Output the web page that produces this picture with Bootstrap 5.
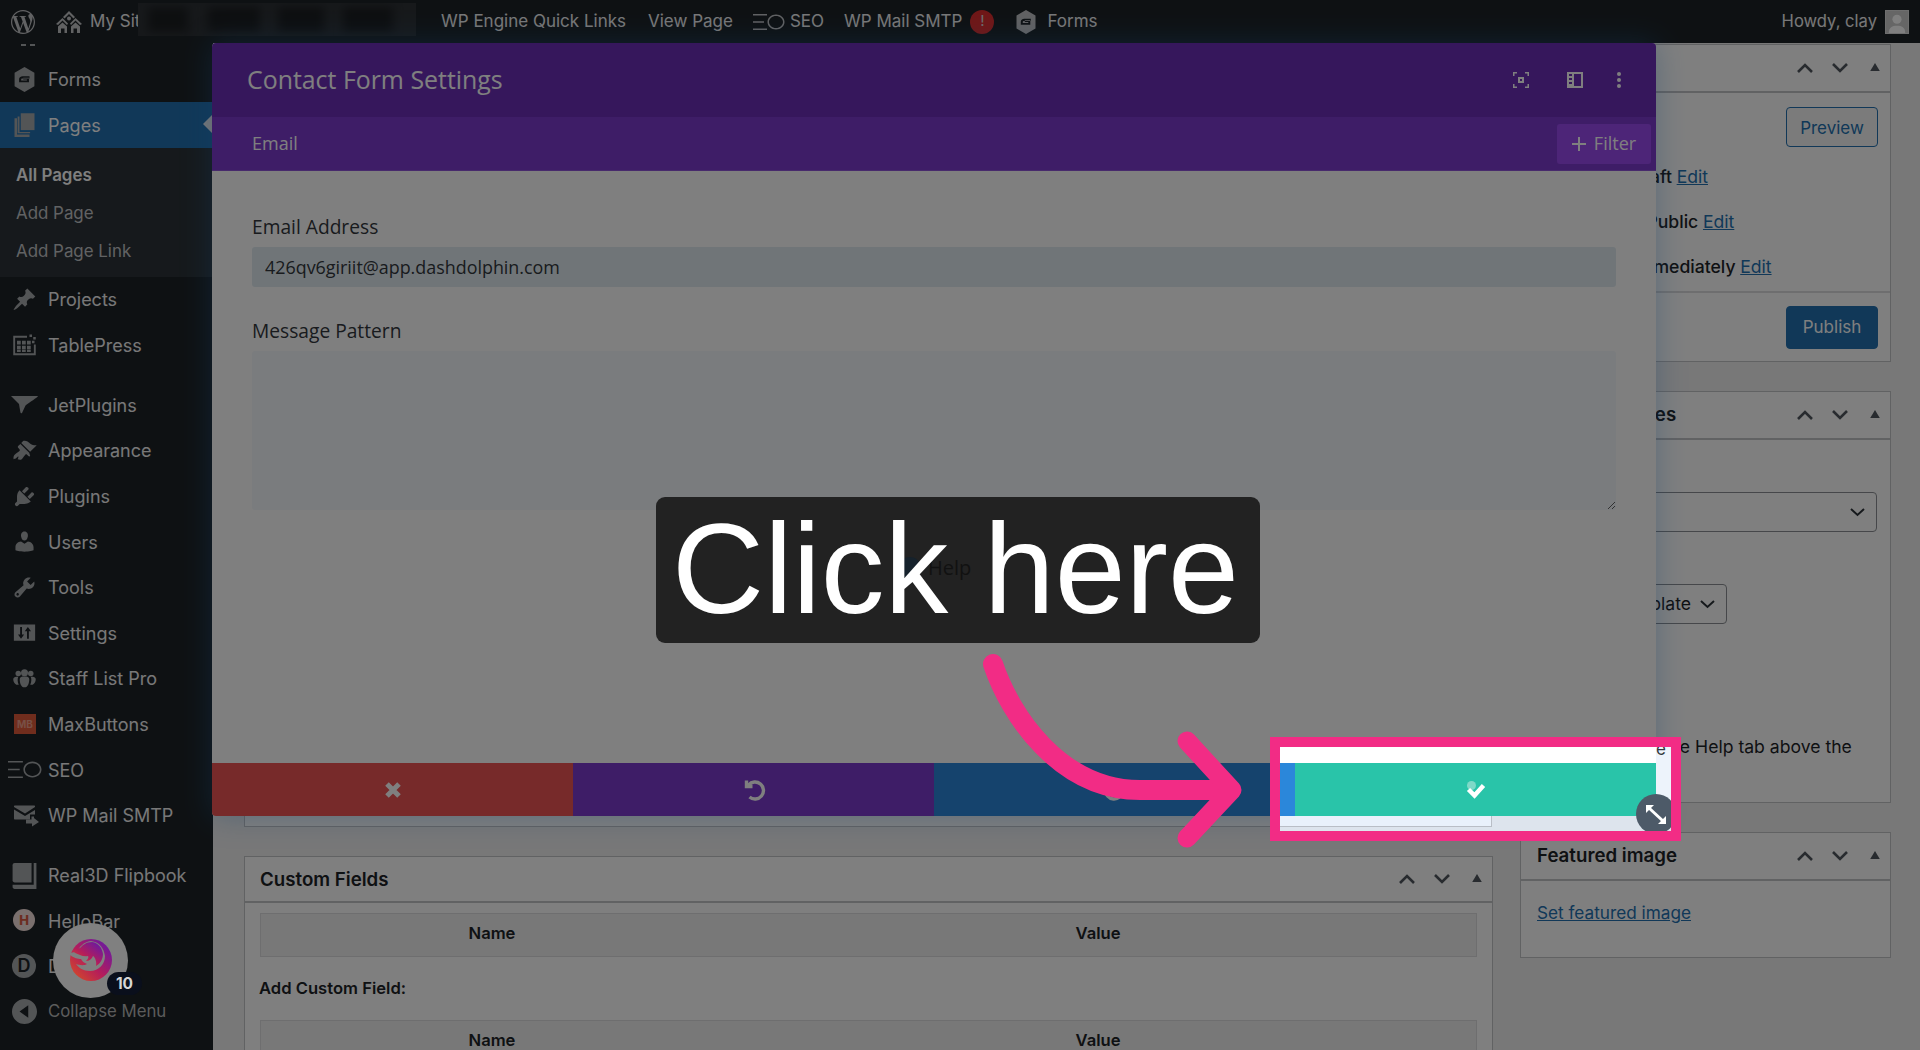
<!doctype html>
<html lang="en">
<head>
<meta charset="utf-8">
<title>Contact Form Settings</title>
<link href="https://cdn.jsdelivr.net/npm/bootstrap@5.3.0/dist/css/bootstrap.min.css" rel="stylesheet">
<style>
html,body{margin:0;height:1050px;overflow:hidden;background:#f0f0f1}
.stage{position:relative;width:1920px;height:1050px;overflow:hidden;font-family:Inter,"Liberation Sans",sans-serif;color:#1d2327;background:#f0f0f1}
.wpbar{height:43px;background:#1d2327;color:#f0f0f1;font-size:17px;position:relative}
.wpbar svg{fill:#c3c4c7;display:block}
.wb-logo{margin-left:11px;width:24px;height:24px}
.wb-home{margin-left:21px;width:26px;height:22px}
.wb-site{margin-left:8px;width:351px;white-space:nowrap}
.wb-e{margin-right:22px;white-space:nowrap}
.wb-n{margin-right:20px;white-space:nowrap}
.wb-seo{width:32px;height:18px;margin-right:5px}
.wb-alert{width:24px;height:24px;border-radius:50%;background:#e02f2f;color:#ddd;font-size:15px;margin-left:8px;margin-right:22px}
.wb-gf{width:20px;height:24px;margin-right:11px}
.wb-how{margin-left:auto;margin-right:8px;font-size:16.6px}
.wb-ava{width:24px;height:24px;background:#ccc;margin-right:11px;border:1px solid #ddd;overflow:hidden}
.blurbox{position:absolute;left:138px;top:3px;width:278px;height:33px;background:#2e3236;overflow:hidden}
.blurbox i{position:absolute;top:4px;height:25px;background:#1b1e21;filter:blur(5px)}
.bl1{left:10px;width:40px}.bl2{left:70px;width:52px}.bl3{left:140px;width:46px}.bl4{left:205px;width:50px}
.side{width:213px;height:1007px;background:#1d2327;color:#f0f0f1;font-size:18px;flex:none;overflow:hidden}
.sidetop{height:13.7px;padding-left:21px;gap:4px}
.sidetop b{display:block;width:5px;height:2px;margin-top:1px;background:#a7aaad}
.srow{height:45.6px;padding-left:48px;position:relative;white-space:nowrap}
.srow svg{position:absolute;left:12px;top:10px;width:25px;height:25px;fill:#a7aaad}
.srow.wide svg{left:8px;width:34px}
.srow.wjet svg{left:11px;width:27px}
.srow.wmail svg{left:13px;width:27px}
.srow.wbook svg{left:12px;width:25px;height:26px}
.srow.cur{background:#2271b1;color:#fff}
.srow.cur::after{content:"";position:absolute;right:1px;top:13px;border:9px solid transparent;border-right-color:#f0f0f1;border-left:0}
.sub{background:#2c3338;height:129px;padding:9px 0 0 16px;font-size:16.9px;color:#c3c4c7}
.sub div{height:38px;display:flex;align-items:center}
.sub .on{color:#fff;font-weight:600}
.gap1{margin-top:14.4px}
.colps{font-size:16.8px;color:#b8b8b8;margin-top:-1px}
.mb{position:absolute;left:14px;top:12px;width:22px;height:20px;background:#e05a3a;color:#f1a08c;font-size:10px;font-weight:700;line-height:20px;text-align:center}
.hb{position:absolute;left:13px;top:11px;width:22px;height:22px;border-radius:50%;background:#f5e0dc;color:#d85a42;font-size:13px;font-weight:800;line-height:22px;text-align:center}
.dcirc{position:absolute;left:12px;top:10px;width:24px;height:24px;border-radius:50%;background:#a7aaad;color:#1d2327;font-size:18px;font-weight:600;line-height:24px;text-align:center}
.pagew{flex:1;padding:1px 28px 0 31px;gap:27px;min-width:0}
.leftc{width:1249px;flex:none}
.rightc{width:371px;flex:none}
.pbox{background:#fff;border:1px solid #c3c4c7;position:relative;font-size:17.6px}
.pbox-h{height:48px;border-bottom:2px solid #c3c4c7;padding:0 7px 0 16px;font-size:18.7px;font-weight:600;gap:17px}
.pbox-h .ttl{margin-right:auto;white-space:nowrap}
.pbox-h svg{width:18px;height:14px;stroke:#50575e;stroke-width:2.6;fill:none}
.pbox-h svg.tri{fill:#50575e;stroke:none;width:10px;height:8px;margin-left:4px;margin-right:3px;margin-top:-3px}
.box0{height:725px;margin-top:58px}
.box1{height:318px}
.box2{height:412px;margin-top:29px}
.box3{height:126px;margin-top:29px}
.boxcf{height:300px;margin-top:29px}
.boxcf .pbox-h{height:46px;padding-left:15px}
.boxcf .ttl{padding-top:2px}
.wbtn{position:absolute;right:12px;top:62px;width:92px;height:40px;border:1px solid #2271b1;border-radius:4px;color:#2271b1;font-size:17px;background:#f6f7f7;padding:3px 0 0}
.wpub{position:absolute;right:12px;top:261px;width:92px;height:43px;background:#2271b1;border:1px solid #2271b1;border-radius:4px;color:#fff;font-size:17px;padding:0}
.mrow{position:absolute;left:44px;white-space:nowrap;font-weight:500}
.mr1{top:119px;left:46px}.mr2{top:164px}.mr3{top:209px;left:46px}
.mrow a,.flink{color:#2271b1;text-decoration:underline;font-weight:400}
.flink{margin:19px 16px 0;font-size:17.2px}
.sline{position:absolute;left:0;right:0;top:246px;border-top:2px solid #dcdcde}
.fakesel{position:absolute;border:1px solid #8c8f94;border-radius:4px;height:40px;background:#fff;white-space:nowrap;overflow:hidden;padding-right:10px}
.fs1{left:16px;right:13px;top:100px}
.fs2{left:16px;width:190px;top:192px}
.helpl{position:absolute;left:6px;top:342px;white-space:nowrap}
.fakesel svg{width:17px;height:10px;stroke:#2c3338;stroke-width:2;fill:none}
.tbl-h{margin:10px 15px 0;height:44px;background:#f0f0f0;border:1px solid #dcdcde;font-weight:600;font-size:16.6px}
.tbl-h span{position:absolute;transform:translate(-50%,-2px)}
.tbl-h .nm{left:247px}.tbl-h .vl{left:853px}
.addf{margin:20px 14px 21px;font-weight:600;font-size:16.6px;line-height:22px}
.setm{position:absolute;left:212px;top:43px;width:1444px;height:773px;z-index:40;background:#fff;border-radius:4px 4px 0 4px;box-shadow:0 0 30px rgba(43,135,218,.35);font-family:"Open Sans","Liberation Sans",sans-serif}
.setm-h{height:74px;background:#6c2eb9;color:#fff;padding:0 27px 0 35px;font-size:24.9px;border-radius:4px 4px 0 0}
.setm-h svg{width:20px;height:20px;fill:#fff;margin-left:34px}
.setm-h svg.ic2{margin-left:34.5px}
.setm-h svg.ic3{margin-left:24px}
.setm-s{height:54px;background:#7d3bcf;color:#fff;padding:0 5px 0 40px;font-size:18px;border-bottom:1px solid #8f55d8}
.fltbtn{height:40px;width:94px;background:#9b4af0;color:#fff;font-size:18px;padding:0;border:0;border-radius:3px}
.setm-b{flex:1;padding:0 40px;position:relative;font-size:19.2px}
.setm-b label{color:#32373c;font-weight:500;display:block;margin:0 0 8px;line-height:24px}
.lb1{margin-top:44px!important}
.lb2{margin-top:32px!important}
.emailv{height:40px;background:#e1ebf1;border:0;border-radius:3px;font-size:17.9px;color:#32373c;padding:0 13px;box-shadow:none}
.msgv{height:159px;background:#f4f8fc;border:0;border-radius:3px;resize:vertical;box-shadow:none}
.setm-f{height:53px}
.fbtn{flex:1 1 0;border-radius:0;border:0;height:53px;padding:0}
.fbtn svg{width:26px;height:26px;fill:none;stroke:#fff}
.f-r{background:#ef5555;border-bottom-left-radius:4px}.f-p{background:#7d3bcf}.f-b{background:#2b87da}.f-g{background:#29c4a9}
.dimr{position:absolute;inset:0;background:rgba(0,0,0,.5);z-index:50}
.bub{position:absolute;left:53px;top:923px;width:75px;height:75px;border-radius:50%;background:#808080;z-index:55}
.bub svg{position:absolute;left:16px;top:15px;width:44px;height:44px}
.bub-n{position:absolute;left:54px;top:49px;width:35px;height:23px;border-radius:12px;background:#0a0f1c;color:#d6d6d6;font:700 15.5px/23px Inter,sans-serif;text-align:center}
.spotw{position:absolute;left:1270px;top:737px;width:411px;height:104px;border:10px solid #f22c85;z-index:60;background:#fff;overflow:hidden}
.sp1{height:16px;background:#fff}
.sp1 em{font-style:normal;display:block;width:15px;height:16px;margin-left:auto;background:#edf3fb;color:#32373c;font-size:17px;line-height:0;padding-left:0;overflow:hidden;padding-top:2px}
.sp2{height:53px}
.sp2 .a{width:15px;background:#2b87da}
.sp2 .t{width:361px;background:#29c4a9;position:relative}
.sp2 .c{width:15px;background:#edf3fb}
.sp3{height:15px;background:#dde4ed}
.sp3 .p{width:212px;height:11px;background:#e9f1fb;border-right:1px solid #b9bec6;border-bottom:1px solid #b9bec6}
.chk{width:24px;height:20px}
.rsz{position:absolute;left:356px;top:47px;width:40px;height:40px;border-radius:50%;background:#4d5a68}
.tipb{position:absolute;left:656px;top:497px;width:604px;height:146px;background:#222;border-radius:9px;z-index:70;color:#fff;font:400 127.5px/1 "Liberation Sans",Arial,sans-serif;white-space:nowrap;padding-right:5px}
.tipb span.h{position:absolute;left:272px;top:59px;font:400 20px/24px "Open Sans",sans-serif;color:#111}
.tipb span.d{position:absolute;left:243px;top:60px;width:22px;height:22px;border-radius:50%;background:#16222c}
.tipb span.m{position:relative}
.arw{position:absolute;left:0;top:0;z-index:65;pointer-events:none}
</style>
</head>
<body>
<svg width="0" height="0" class="position-absolute">
<defs>
<symbol id="i-gf" viewBox="0 0 20 24"><path fill-rule="evenodd" d="M10 0l9.500 5.500v13L10 24 .5 18.500v-13zM6 9.500c-.9.6-1.200 1.300-1.200 2.500v2.700h9.500v-4.400H8.800v1.700h3.500v1h-5.500V12c0-.5.300-.9 1.100-.9h6.900V8.800H8.200c-.9 0-1.600.2-2.200.7z"/></symbol>
<symbol id="i-pages" viewBox="0 0 20 20"><path d="M7 1h11v13.500H7z"/><path d="M2 5h2v13h10v2H2z"/><path d="M4.500 3.500h1.500v12.500h8.500v1H4.500z"/></symbol>
<symbol id="i-pin" viewBox="0 0 20 20"><path d="M10.440 3.020l1.820-1.820 6.360 6.350-1.830 1.820c-1.050-.68-2.480-.57-3.410.36l-.75.75c-.92.930-1.040 2.350-.35 3.410l-1.830 1.820-2.410-2.410-2.800 2.790c-.42.420-3.380 2.710-3.800 2.290s1.860-3.390 2.280-3.810l2.790-2.790L4.100 9.360l1.830-1.820c1.050.69 2.480.57 3.400-.36l.75-.75c.93-.92 1.050-2.350.36-3.410z"/></symbol>
<symbol id="i-table" viewBox="0 0 20 20"><path fill-rule="evenodd" d="M1 3h11v1.500H2.500V17h15V10H19v8.500H1z"/><path d="M4 7h3v3H4zM8 7h3v3H8zM12 7h3v3h-3zM4 11h3v2.500H4zM8 11h3v2.500H8zM12 11h3v2.500h-3zM4 14h3v2H4zM8 14h3v2H8zM12 14h3v2h-3zM14 2h2v2h-2zM17 4h2v2h-2zM16 7h2v2h-2z"/></symbol>
<symbol id="i-jet" viewBox="0 0 27 20"><path d="M0 1.500h27c-.3 1.500-9 6.500-12.500 9.500L11 18.500c-.8.500-1.500 0-1.600-.8L8 9.500z"/></symbol>
<symbol id="i-brush" viewBox="0 0 20 20"><path d="M14.480 11.060L7.410 3.990l1.500-1.500c.5-.56 2.300-.47 3.510.32 1.210.8 1.430 1.280 2.910 2.100 1.180.64 2.450 1.260 4.450.85zm-.71.71L6.700 4.700 4.930 6.470c-.39.39-.39 1.020 0 1.410l1.060 1.060c.39.39.39 1.030 0 1.420-.6.6-1.430 1.110-2.210 1.690-.35.26-.7.53-1.010.84C1.430 13.710.96 15.600 1.270 17c.31-.17.56-.28.8-.37.37-.14.71-.28 1.130-.53.28-.17.59-.4.9-.7.28-.27.59-.51.89-.77.29.76.03 1.650-.46 2.440.67.3 2 .66 2.740.23.3-.17.6-.39.85-.66.29-.29.56-.61.81-.96.59-.8 1.110-1.680 1.730-2.300.39-.39 1.030-.39 1.420 0l1.060 1.060c.39.39 1.020.39 1.410 0z"/></symbol>
<symbol id="i-plug" viewBox="0 0 20 20"><path d="M13.110 4.360L9.870 7.600 8 5.730l3.240-3.240c.35-.34 1.050-.2 1.560.32.52.51.66 1.210.31 1.550zm-8 1.770l.91-1.120 9.010 9.010-1.190.84c-.71.71-2.630 1.160-3.820 1.160H6.140L4.900 17.260c-.59.59-1.540.59-2.120 0-.59-.58-.59-1.530 0-2.120l1.240-1.240v-3.880c0-1.130.4-3.190 1.090-3.890zm7.260 3.970l3.240-3.240c.34-.35 1.040-.21 1.550.31.52.51.66 1.210.31 1.550l-3.240 3.250z"/></symbol>
<symbol id="i-user" viewBox="0 0 20 20"><path d="M10 9.250c-2.270 0-2.730-3.440-2.730-3.440C7 4.020 7.820 2 9.970 2c2.160 0 2.980 2.020 2.710 3.810 0 0-.41 3.440-2.680 3.440zm0 2.570L12.720 10c2.390 0 4.520 2.330 4.520 4.530v2.490s-3.650 1.130-7.240 1.130c-3.650 0-7.240-1.130-7.240-1.130v-2.490c0-2.250 1.940-4.480 4.470-4.480z"/></symbol>
<symbol id="i-tool" viewBox="0 0 20 20"><path fill-rule="evenodd" d="M16.680 9.770c-1.340 1.340-3.300 1.670-4.950.99l-5.410 6.520c-.99.99-2.590.99-3.580 0s-.99-2.590 0-3.570l6.520-5.420c-.68-1.650-.35-3.610.99-4.950 1.280-1.280 3.120-1.620 4.720-1.060l-2.890 2.890 2.820 2.820 2.860-2.870c.53 1.580.18 3.390-1.080 4.650zM3.810 16.210c.4.39 1.040.39 1.430 0 .4-.4.4-1.040 0-1.430-.39-.4-1.030-.4-1.430 0-.39.39-.39 1.030 0 1.430z"/></symbol>
<symbol id="i-set" viewBox="0 0 20 20"><path fill-rule="evenodd" d="M1.500 3.500h17v13h-17zM6.500 5.500h1.500v6h1.700l-2.500 3.500L4.800 11.500h1.700zM12 15h1.500V9h1.700l-2.500-3.500L10.200 9H12z"/></symbol>
<symbol id="i-staff" viewBox="0 0 20 20"><circle cx="5" cy="6" r="2.200"/><circle cx="15" cy="6" r="2.200"/><circle cx="10" cy="5.300" r="2.800"/><path d="M1 10.500c0-1.300 1.200-2 2.500-2H5c-.6 1.500-.8 4 .4 6.500H3.500C2 14 1 12.500 1 10.500zM19 10.500c0-1.300-1.200-2-2.500-2H15c.6 1.500.8 4-.4 6.500h1.900C18 14 19 12.500 19 10.500zM6.200 10.500c0-1.500 1.300-2.200 2.300-2.200h3c1 0 2.300.7 2.300 2.200 0 3-1 6.500-3.800 6.500s-3.800-3.500-3.800-6.500z"/></symbol>
<symbol id="i-seo" viewBox="0 0 32 18"><path d="M0 1h14v1.500H0zM0 8.300h11v1.500H0zM0 15.500h14V17H0z"/><path fill-rule="evenodd" d="M23 1.500c4.700 0 8.500 3.300 8.500 7.500s-3.800 7.500-8.500 7.500-8.500-3.300-8.500-7.500 3.800-7.500 8.500-7.500zm0 1.500c-3.900 0-7 2.700-7 6s3.100 6 7 6 7-2.700 7-6-3.100-6-7-6z"/></symbol>
<symbol id="i-mail" viewBox="0 0 27 22"><path d="M2 1h19c.8 0 1 .4 1 1v.5L12 9 1 2.500V2c0-.6.3-1 1-1zM1 5l11 6.500L22 5.500V10h-5v5H2c-.6 0-1-.4-1-1z"/><path d="M18.500 12h2.500v3.500h-2.500zM13 15h6v-3l7 5.500-7 4.500v-3h-6z"/></symbol>
<symbol id="i-book" viewBox="0 0 22 24"><path d="M2 0h15.500v18H2C.8 18 0 17.200 0 16V2C0 .8.800 0 2 0z"/><path d="M19.500 0H22v24H2c-1.200 0-2-.8-2-2v-2h19.500z"/></symbol>
<symbol id="i-col" viewBox="0 0 20 20"><path fill-rule="evenodd" d="M10 0c5.500 0 10 4.500 10 10s-4.500 10-10 10S0 15.500 0 10 4.500 0 10 0zm3 5L6 10l7 5z"/></symbol>
</defs>
</svg>

<div class="stage">
  <header class="wpbar d-flex align-items-center">
    <svg class="wb-logo" viewBox="0 0 24 24"><path d="M21.469 6.825c.84 1.537 1.318 3.3 1.318 5.175 0 3.979-2.156 7.456-5.363 9.325l3.295-9.527c.615-1.54.82-2.771.82-3.864 0-.405-.026-.78-.07-1.11m-7.981.105c.647-.03 1.232-.105 1.232-.105.582-.075.514-.93-.067-.899 0 0-1.755.135-2.88.135-1.064 0-2.85-.15-2.85-.15-.585-.03-.661.855-.075.885 0 0 .54.061 1.125.09l1.68 4.605-2.37 7.08L5.354 6.9c.649-.03 1.234-.1 1.234-.1.585-.075.516-.93-.065-.896 0 0-1.746.138-2.874.138-.2 0-.438-.008-.69-.015C4.911 3.15 8.235 1.215 12 1.215c2.809 0 5.365 1.072 7.286 2.833-.046-.003-.091-.009-.141-.009-1.06 0-1.812.923-1.812 1.914 0 .89.513 1.643 1.06 2.531.411.72.89 1.643.89 2.977 0 .915-.354 1.994-.821 3.479l-1.075 3.585-3.9-11.61.001.014zM12 22.784c-1.059 0-2.081-.153-3.048-.437l3.237-9.406 3.315 9.087c.024.053.05.101.078.149-1.12.393-2.325.609-3.582.609M1.211 12c0-1.564.336-3.05.935-4.39L7.29 21.709C3.694 19.96 1.212 16.271 1.211 12M12 0C5.385 0 0 5.385 0 12s5.385 12 12 12 12-5.385 12-12S18.615 0 12 0"/></svg>
    <svg class="wb-home" viewBox="0 0 26 22"><path d="M13 0l6 6-1.500 1.500L13 3 8.500 7.500 7 6z"/><circle cx="13" cy="7.500" r="2"/><path d="M0 13l6.500-6 5.500 5.500-1 1.500-4.500-4.500L2 14zM26 13l-6.500-6L14 12.500l1 1.500 4.500-4.500L24 14z"/><path d="M2 15.500l4.500-4 4.500 4V22H8.500v-4.500H5V22H2zM15 15.500l4.500-4 4.500 4V22h-3v-4.500h-3.500V22H15z"/></svg>
    <div class="wb-site">My Site</div>
    <div class="wb-e">WP Engine Quick Links</div>
    <div class="wb-n">View Page</div>
    <svg class="wb-seo"><use href="#i-seo"/></svg>
    <div class="wb-n">SEO</div>
    <div class="text-nowrap">WP Mail SMTP</div>
    <div class="wb-alert d-flex align-items-center justify-content-center">!</div>
    <svg class="wb-gf"><use href="#i-gf"/></svg>
    <div>Forms</div>
    <div class="wb-how">Howdy, clay</div>
    <div class="wb-ava"><svg viewBox="0 0 24 24" width="22" height="22"><circle cx="12" cy="9" r="5" fill="#fff"/><path d="M3 24c0-6 4-8 9-8s9 2 9 8z" fill="#fff"/></svg></div>
    <div class="blurbox"><i class="bl1"></i><i class="bl2"></i><i class="bl3"></i><i class="bl4"></i></div>
  </header>

  <div class="d-flex">
    <aside class="side">
      <div class="sidetop d-flex"><b></b><b></b></div>
      <div class="srow d-flex align-items-center"><svg><use href="#i-gf"/></svg>Forms</div>
      <div class="srow cur d-flex align-items-center"><svg><use href="#i-pages"/></svg>Pages</div>
      <div class="sub"><div class="on">All Pages</div><div>Add Page</div><div>Add Page Link</div></div>
      <div class="srow d-flex align-items-center"><svg><use href="#i-pin"/></svg>Projects</div>
      <div class="srow d-flex align-items-center"><svg><use href="#i-table"/></svg>TablePress</div>
      <div class="srow wjet gap1 d-flex align-items-center"><svg><use href="#i-jet"/></svg>JetPlugins</div>
      <div class="srow d-flex align-items-center"><svg><use href="#i-brush"/></svg>Appearance</div>
      <div class="srow d-flex align-items-center"><svg><use href="#i-plug"/></svg>Plugins</div>
      <div class="srow d-flex align-items-center"><svg><use href="#i-user"/></svg>Users</div>
      <div class="srow d-flex align-items-center"><svg><use href="#i-tool"/></svg>Tools</div>
      <div class="srow d-flex align-items-center"><svg><use href="#i-set"/></svg>Settings</div>
      <div class="srow d-flex align-items-center"><svg><use href="#i-staff"/></svg>Staff List Pro</div>
      <div class="srow d-flex align-items-center"><span class="mb">MB</span>MaxButtons</div>
      <div class="srow wide d-flex align-items-center"><svg><use href="#i-seo"/></svg>SEO</div>
      <div class="srow wmail d-flex align-items-center"><svg><use href="#i-mail"/></svg>WP Mail SMTP</div>
      <div class="srow wbook gap1 d-flex align-items-center"><svg><use href="#i-book"/></svg>Real3D Flipbook</div>
      <div class="srow d-flex align-items-center"><span class="hb">H</span>HelloBar</div>
      <div class="srow d-flex align-items-center"><span class="dcirc">D</span>Divi</div>
      <div class="srow colps d-flex align-items-center"><svg><use href="#i-col"/></svg>Collapse Menu</div>
    </aside>

    <main class="pagew d-flex">
      <div class="leftc">
        <div class="pbox box0"></div>
        <section class="pbox boxcf">
          <div class="pbox-h d-flex align-items-center"><span class="ttl">Custom Fields</span>
            <svg viewBox="0 0 18 14"><path d="M2 11l7-7 7 7"/></svg><svg viewBox="0 0 18 14"><path d="M2 3l7 7 7-7"/></svg><svg class="tri" viewBox="0 0 12 10"><path d="M6 0l6 10H0z"/></svg></div>
          <div class="tbl-h d-flex align-items-center"><span class="nm">Name</span><span class="vl">Value</span></div>
          <div class="addf">Add Custom Field:</div>
          <div class="tbl-h d-flex align-items-center"><span class="nm">Name</span><span class="vl">Value</span></div>
        </section>
      </div>
      <div class="rightc">
        <section class="pbox box1">
          <div class="pbox-h d-flex align-items-center"><span class="ttl">Publish</span>
            <svg viewBox="0 0 18 14"><path d="M2 11l7-7 7 7"/></svg><svg viewBox="0 0 18 14"><path d="M2 3l7 7 7-7"/></svg><svg class="tri" viewBox="0 0 12 10"><path d="M6 0l6 10H0z"/></svg></div>
          <button class="btn wbtn">Preview</button>
          <div class="mrow mr1">Status: Draft <a href="#">Edit</a></div>
          <div class="mrow mr2">Visibility: Public <a href="#">Edit</a></div>
          <div class="mrow mr3">Publish immediately <a href="#">Edit</a></div>
          <div class="sline"></div>
          <button class="btn wpub">Publish</button>
        </section>
        <section class="pbox box2">
          <div class="pbox-h d-flex align-items-center"><span class="ttl">Page Attributes</span>
            <svg viewBox="0 0 18 14"><path d="M2 11l7-7 7 7"/></svg><svg viewBox="0 0 18 14"><path d="M2 3l7 7 7-7"/></svg><svg class="tri" viewBox="0 0 12 10"><path d="M6 0l6 10H0z"/></svg></div>
          <div class="fakesel fs1 d-flex align-items-center justify-content-end"><svg viewBox="0 0 17 10"><path d="M2 2l6.500 6L15 2"/></svg></div>
          <div class="fakesel fs2 d-flex align-items-center justify-content-end gap-2">Default template<svg viewBox="0 0 17 10"><path d="M2 2l6.500 6L15 2"/></svg></div>
          <div class="helpl">Need help? Use the Help tab above the</div>
        </section>
        <section class="pbox box3">
          <div class="pbox-h d-flex align-items-center"><span class="ttl">Featured image</span>
            <svg viewBox="0 0 18 14"><path d="M2 11l7-7 7 7"/></svg><svg viewBox="0 0 18 14"><path d="M2 3l7 7 7-7"/></svg><svg class="tri" viewBox="0 0 12 10"><path d="M6 0l6 10H0z"/></svg></div>
          <a class="flink d-block" href="#">Set featured image</a>
        </section>
      </div>
    </main>
  </div>

  <section class="setm d-flex flex-column">
    <div class="setm-h d-flex align-items-center">
      <div class="me-auto">Contact Form Settings</div>
      <svg viewBox="0 0 20 20"><path d="M2 2h4v1.500H3.500V6H2zM14 2h4v4h-1.500V3.500H14zM2 14h1.500v2.500H6V18H2zM18 14v4h-4v-1.500h2.500V14zM7 7h6v6H7zM9 9v2h2V9z" fill-rule="evenodd"/></svg>
      <svg class="ic2" viewBox="0 0 20 20"><path fill-rule="evenodd" d="M2 2h16v16H2zM4 4v2h3V4zM4 8v2h3V8zM4 12v2h3v-2zM9 4v12h7V4z"/></svg>
      <svg class="ic3" viewBox="0 0 20 20"><circle cx="10" cy="4" r="2"/><circle cx="10" cy="10" r="2"/><circle cx="10" cy="16" r="2"/></svg>
    </div>
    <div class="setm-s d-flex align-items-center">
      <div class="me-auto">Email</div>
      <button class="btn fltbtn d-flex align-items-center justify-content-center gap-2"><svg width="14" height="14" viewBox="0 0 14 14"><path d="M6 0h2v6h6v2H8v6H6V8H0V6h6z" fill="#fff"/></svg>Filter</button>
    </div>
    <div class="setm-b">
      <label class="lb1">Email Address</label>
      <input class="form-control emailv" value="426qv6giriit@app.dashdolphin.com" readonly>
      <label class="lb2">Message Pattern</label>
      <textarea class="form-control msgv"></textarea>
    </div>
    <div class="setm-f d-flex">
      <button class="btn fbtn f-r"><svg viewBox="0 0 26 26"><path d="M7 7l12 12M19 7L7 19" stroke-width="5"/></svg></button>
      <button class="btn fbtn f-p"><svg viewBox="0 0 26 26"><path d="M7.500 8a8.500 8.500 0 1 1 1 12M5.500 3.500v6h6" stroke-width="3.400"/></svg></button>
      <button class="btn fbtn f-b"><svg viewBox="0 0 26 26"><path d="M18.500 8a8.500 8.500 0 1 0-1 12M20.500 3.500v6h-6" stroke-width="3.400"/></svg></button>
      <button class="btn fbtn f-g"></button>
    </div>
  </section>

  <div class="dimr"></div>

  <div class="bub">
    <svg viewBox="0 0 44 44"><defs><linearGradient id="dg" x1="0" y1="1" x2="1" y2="0"><stop offset="0" stop-color="#d9531e"/><stop offset=".45" stop-color="#b51d5a"/><stop offset="1" stop-color="#5a18b0"/></linearGradient></defs>
      <circle cx="22" cy="22" r="21" fill="url(#dg)"/>
      <path d="M0 16c3-2 6-2 8-3 3-4 6-9 14-10 9 1 13 8 14 15 0 8-6 15-15 15-7 0-11-3-14-7 3 1 8 2 11 0-3-1-5-3-6-5-3 0-8-1-12-5z" fill="#808080"/>
      <path d="M3 13c3-2 6-2 8-3 3-3 6-6 12-6 7 1 10 6 11 12 0 5-3 10-7 12 1-4-1-9-3-10-1 3-4 5-7 5 2-2 3-4 2-5-4 1-10-1-16-5z" fill="url(#dg)"/>
    </svg>
    <div class="bub-n">10</div>
  </div>

  <svg class="arw" width="1920" height="1050" viewBox="0 0 1920 1050" fill="none" stroke="#f22c85" stroke-linecap="round" stroke-linejoin="round">
    <path d="M993 664C1010 715 1060 790 1140 790L1228 790" stroke-width="20"/>
    <path d="M1187 741l45 49-45 48" stroke-width="19"/>
  </svg>

  <div class="spotw">
    <div class="sp1"><em>e</em></div>
    <div class="sp2 d-flex">
      <div class="a"></div>
      <div class="t d-flex align-items-center justify-content-center"><svg class="chk" viewBox="0 0 24 20"><circle cx="7.500" cy="5.500" r="4.500" fill="#7fd9c8"/><path d="M4.500 9.500l6 6 9-10" fill="none" stroke="#fff" stroke-width="4.500"/></svg></div>
      <div class="c"></div>
    </div>
    <div class="sp3"><div class="p"></div></div>
    <div class="rsz"><svg viewBox="0 0 40 40" width="40" height="40"><path d="M13 14l14 13" fill="none" stroke="#fff" stroke-width="3"/><path d="M10 11h8l-8 8zM30 30h-8l8-8z" fill="#fff"/></svg></div>
  </div>

  <div class="tipb d-flex align-items-center justify-content-center">
    <span class="d"></span>
    <span class="h">Help</span>
    <span class="m">Click here</span>
  </div>
</div>
<script src="https://cdn.jsdelivr.net/npm/bootstrap@5.3.0/dist/js/bootstrap.bundle.min.js"></script>
</body>
</html>
